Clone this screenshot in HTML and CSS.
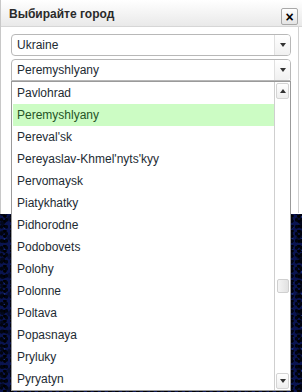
FILE: index.html
```html
<!DOCTYPE html>
<html>
<head>
<meta charset="utf-8">
<link rel="stylesheet" href="styles.css">
</head>
<body>
<div class="dialog">
  <div class="header">
    <span class="title">Выбирайте город</span>
    <span class="close">×</span>
  </div>
  <div class="body">
    <div class="select">
      <span class="value">Ukraine</span>
      <span class="btn"><span class="tri down"></span></span>
    </div>
    <div class="select open">
      <span class="value">Peremyshlyany</span>
      <span class="btn"><span class="tri down"></span></span>
      <div class="list">
        <div class="items">
          <div class="item">Pavlohrad</div>
          <div class="item active">Peremyshlyany</div>
          <div class="item">Pereval'sk</div>
          <div class="item">Pereyaslav-Khmel'nyts'kyy</div>
          <div class="item">Pervomaysk</div>
          <div class="item">Piatykhatky</div>
          <div class="item">Pidhorodne</div>
          <div class="item">Podobovets</div>
          <div class="item">Polohy</div>
          <div class="item">Polonne</div>
          <div class="item">Poltava</div>
          <div class="item">Popasnaya</div>
          <div class="item">Pryluky</div>
          <div class="item">Pyryatyn</div>
        </div>
        <div class="scrollbar">
          <div class="sbtn"><span class="tri up"></span></div>
          <div class="thumb"></div>
          <div class="sbtn bottom"><span class="tri down"></span></div>
        </div>
      </div>
    </div>
  </div>
</div>
</body>
</html>
```
FILE: styles.css
```css
html, body {
  margin: 0;
  padding: 0;
}
body {
  width: 302px;
  height: 392px;
  overflow: hidden;
  font-family: "Liberation Sans", Arial, sans-serif;
  font-size: 12px;
  background-color: #0a1450;
  background-image:
    radial-gradient(ellipse at 30% 40%, #01040f 0 1.2px, transparent 2px),
    radial-gradient(circle at 70% 20%, #000 0 1.4px, transparent 2.2px),
    radial-gradient(circle at 50% 70%, #1a2c7a 0 0.7px, transparent 1.2px),
    radial-gradient(ellipse at 20% 80%, #02071c 0 2px, transparent 3px),
    radial-gradient(circle at 60% 50%, #050c30 0 2.5px, transparent 3.5px);
  background-size: 5px 7px, 7px 5px, 9px 11px, 13px 9px, 17px 19px;
}
.dialog {
  width: 302px;
  height: 214px;
  background: #fff;
  border-left: 1px solid #c8c8c8;
  box-sizing: border-box;
}
.header {
  height: 27px;
  box-sizing: border-box;
  border-bottom: 1px solid #d6d6d6;
  background: linear-gradient(#ffffff, #e9e9e9);
  display: flex;
  align-items: center;
  justify-content: space-between;
  padding: 0 4px 0 8px;
}
.title {
  font-weight: bold;
  font-size: 12px;
  color: #2a2a2a;
  margin-top: 2px;
}
.close {
  width: 15px;
  height: 15px;
  border: 1px solid #a8a8a8;
  border-radius: 2px;
  background: linear-gradient(#ffffff, #e4e4e4);
  display: flex;
  align-items: center;
  justify-content: center;
  font-weight: bold;
  font-size: 14px;
  line-height: 1;
  color: #000;
  margin-top: 7px;
}
.body {
  height: 186px;
  width: 298px;
  box-sizing: border-box;
  padding: 7px 7px 0 10px;
  border-right: 1px solid #d0d0d0;
}
.select {
  position: relative;
  height: 22px;
  box-sizing: border-box;
  border: 1px solid #b8b8b8;
  border-radius: 4px;
  background: #fff;
  display: flex;
  align-items: center;
  margin-bottom: 3px;
}
.select.open {
  border-radius: 4px 4px 0 0;
}
.value {
  flex: 1;
  padding-left: 5px;
  color: #1d2b33;
  font-size: 12px;
}
.btn {
  width: 15px;
  height: 100%;
  border-left: 1px solid #e0e0e0;
  background: linear-gradient(#ffffff, #f0f0f0);
  border-radius: 0 3px 3px 0;
  display: flex;
  align-items: center;
  justify-content: center;
}
.tri {
  width: 0;
  height: 0;
  border-left: 3.5px solid transparent;
  border-right: 3.5px solid transparent;
}
.tri.down {
  border-top: 4px solid #333;
}
.tri.up {
  border-bottom: 4px solid #333;
}
.list {
  position: absolute;
  left: -1px;
  right: -1px;
  top: 21px;
  height: 310px;
  box-sizing: border-box;
  border: 1px solid #9a9a9a;
  background: #fff;
  display: flex;
  z-index: 2;
}
.items {
  flex: 1;
  padding-left: 1px;
}
.item {
  height: 22px;
  line-height: 22px;
  padding-left: 4px;
  color: #1d2b33;
  white-space: nowrap;
}
.item.active {
  background: #ccfcc4;
  color: #265426;
}
.scrollbar {
  width: 15px;
  border-left: 1px solid #cfcfcf;
  display: flex;
  flex-direction: column;
  align-items: center;
  background: #fff;
}
.sbtn {
  width: 13px;
  height: 16px;
  box-sizing: border-box;
  border: 1px solid #d4d4d4;
  border-radius: 2px;
  background: linear-gradient(#ffffff, #eeeeee);
  display: flex;
  align-items: center;
  justify-content: center;
  margin-top: 1px;
}
.sbtn.bottom {
  margin-top: auto;
  margin-bottom: 1px;
}
.thumb {
  width: 12px;
  height: 14px;
  box-sizing: border-box;
  border: 1px solid #cfcfcf;
  border-radius: 2px;
  background: linear-gradient(90deg, #f4f4f4, #e2e2e2);
  margin-top: 180px;
}
```
